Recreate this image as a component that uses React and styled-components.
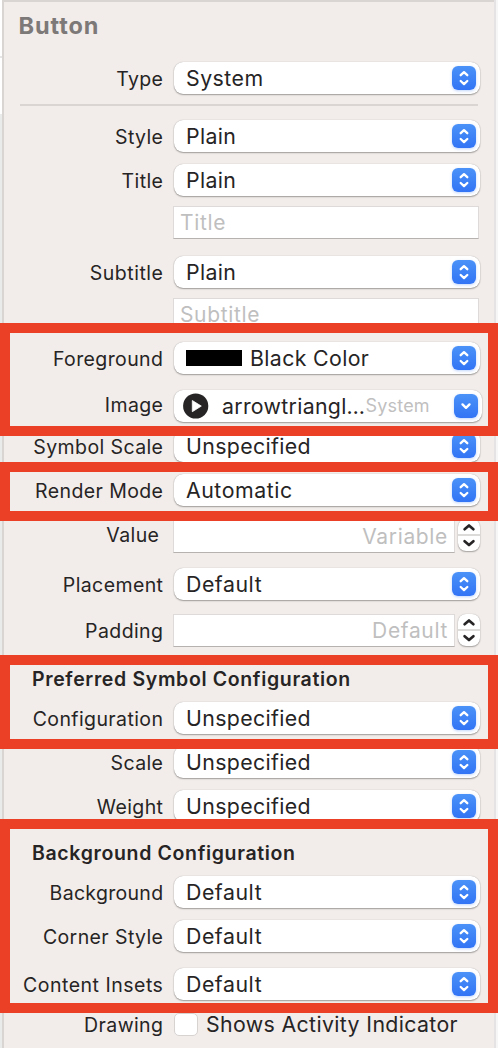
import React from "react";
import styled, { createGlobalStyle } from "styled-components";

const GlobalStyle = createGlobalStyle`
  * { box-sizing: border-box; }
  body {
    margin: 0;
    background: #f2edea;
    font-family: Inter, "Liberation Sans", sans-serif;
    color: #262424;
  }
`;

const Page = styled.div`
  display: flex;
  width: 498px;
  height: 1048px;
  overflow: hidden;
`;

const LeftGutter = styled.div`
  width: 2px;
  flex: none;
  background: linear-gradient(#fff 0 56px, #e6e6e6 56px 58px, #fff 58px 114px, #e9eaea 114px);
`;

const RightGutter = styled.div`
  width: 4px;
  flex: none;
  border-left: 2px solid #e5e3e3;
  background: #f7f6f6;
`;

const Inspector = styled.main`
  flex: 1;
  min-width: 0;
  border-top: 2px solid #d9d5d2;
  border-left: 2px solid #d9d5d2;
  background: #f2edea;
`;

const Title = styled.h1`
  margin: 0;
  padding: 8px 0 0 14.5px;
  height: 60px;
  font-size: 23.5px;
  line-height: 32px;
  font-weight: 700;
  letter-spacing: 0.9px;
  color: #7d7978;
`;

const Divider = styled.hr`
  margin: 10px 16px 14px;
  height: 2px;
  border: 0;
  background: #dad5d3;
`;

const Group = styled.section`
  position: relative;
  margin-top: ${(p) => p.$gap || 0}px;
`;

const Highlight = styled.div`
  position: absolute;
  z-index: 2;
  left: -4px;
  right: -4px;
  top: ${(p) => p.$top}px;
  bottom: ${(p) => p.$bottom}px;
  border: 10px solid #eb4026;
  pointer-events: none;
`;

const GroupTitle = styled.h2`
  margin: 0;
  padding-left: 28px;
  height: 35px;
  font-size: 19.5px;
  line-height: 24px;
  font-weight: 600;
  letter-spacing: 0.65px;
`;

const Row = styled.div`
  display: flex;
  height: 32px;
  margin-top: ${(p) => p.$gap || 0}px;
`;

const Label = styled.label`
  width: 159.4px;
  flex: none;
  margin-top: ${(p) => 1 + (p.$drop || 0)}px;
  margin-right: 10.6px;
  padding-right: ${(p) => p.$inset || 0}px;
  text-align: right;
  white-space: nowrap;
  font-size: 19.5px;
  line-height: 32px;
  letter-spacing: ${(p) => p.$track ?? 0.4}px;
`;

const PopUp = styled.div`
  display: flex;
  align-items: center;
  width: ${(p) => (p.$wide ? 308 : 306)}px;
  height: 32px;
  padding: 0 4px 0 ${(p) => (p.$wide ? 9 : 12)}px;
  border-radius: 9px;
  background: #fff;
  box-shadow: 0 0 1px rgba(0, 0, 0, 0.3), 0 1px 1.5px rgba(0, 0, 0, 0.32);
`;

const Value = styled.span`
  flex: 1;
  white-space: nowrap;
  font-size: 21.3px;
  line-height: 32px;
  letter-spacing: ${(p) => p.$track ?? 0.37}px;
`;

const ImageName = styled(Value)`
  flex: none;
  width: 143.5px;
  margin-left: 13px;
`;

const Source = styled.span`
  flex: 1;
  font-size: 18px;
  line-height: 32px;
  letter-spacing: 0.2px;
  color: #c1bfbf;
`;

const Swatch = styled.span`
  width: 56px;
  height: 16px;
  margin-right: 8px;
  background: #000;
`;

const Field = styled.div`
  width: 306px;
  height: 33px;
  padding: 0 6px;
  border: 1px solid #dedada;
  border-bottom-color: #b5b2b0;
  background: #fff;
  color: #bfbfbf;
  font-size: 21px;
  line-height: 32px;
  letter-spacing: 0.65px;
`;

const NumberField = styled(Field)`
  width: 282px;
  margin-left: -1px;
  padding-right: 6px;
  text-align: right;
`;

const FieldRow = styled(Row)`
  padding-left: 169px;
`;

const StepperBox = styled.div`
  display: flex;
  width: 22px;
  height: 32px;
  margin: ${(p) => (p.$raise ? -p.$raise : 0)}px 0 0 3px;
  border-radius: 8px;
  background: #fff;
  box-shadow: 0 0 1px rgba(0, 0, 0, 0.3), 0 1px 1.5px rgba(0, 0, 0, 0.3);
`;

const Badge = styled.span`
  display: flex;
  width: 24px;
  height: 24px;
  border-radius: 6px;
  background: linear-gradient(#4b92f8, #3274f5);
  box-shadow: 0 1px 3px rgba(50, 116, 245, 0.3);
`;

const CheckBox = styled.span`
  width: 24px;
  height: 23px;
  margin-right: 8px;
  border: 1px solid #d6d3d1;
  border-radius: 5px;
  background: #fff;
`;

const CheckText = styled(Value)`
  line-height: 23px;
`;

const Chevrons = () => (
  <Badge>
    <svg width="24" height="24" fill="none" stroke="#fff" strokeWidth="2.3" strokeLinecap="round" strokeLinejoin="round">
      <path d="M8.7 9.2 12 6.1l3.3 3.1M8.7 15l3.3 3.1 3.3-3.1" />
    </svg>
  </Badge>
);

const DownBadge = () => (
  <Badge>
    <svg width="24" height="24" fill="none" stroke="#fff" strokeWidth="2.4" strokeLinecap="round" strokeLinejoin="round">
      <path d="M8.5 10.4l3.5 3.4 3.5-3.4" />
    </svg>
  </Badge>
);

const Stepper = ({ raise }) => (
  <StepperBox $raise={raise}>
    <svg width="22" height="32" fill="none" stroke="#262424" strokeWidth="2.7" strokeLinecap="round" strokeLinejoin="round">
      <path d="M0 16h22" stroke="#dddada" strokeWidth="2" strokeLinecap="butt" />
      <path d="M6.6 10.2 11 6.4l4.4 3.8M6.6 22.2l4.4 3.8 4.4-3.8" />
    </svg>
  </StepperBox>
);

const PlayIcon = () => (
  <svg width="26" height="26" viewBox="0 0 26 26">
    <circle cx="12.7" cy="13" r="12.6" fill="#262424" />
    <path d="M9.3 7.5v11.2l9-5.6z" fill="#fff" stroke="#fff" strokeWidth=".8" strokeLinejoin="round" />
  </svg>
);

const Select = ({ label, value, gap, lt, vt, swatch }) => (
  <Row $gap={gap}>
    <Label $track={lt}>{label}</Label>
    <PopUp>
      {swatch && <Swatch />}
      <Value $track={vt}>{value}</Value>
      <Chevrons />
    </PopUp>
  </Row>
);

export default function App() {
  return (
    <Page>
      <GlobalStyle />
      <LeftGutter />
      <Inspector>
        <Title>Button</Title>
        <Select label="Type" value="System" vt={0.5} />
        <Divider />
        <Select label="Style" value="Plain" />
        <Select label="Title" value="Plain" gap={12} />
        <FieldRow $gap={10}>
          <Field>Title</Field>
        </FieldRow>
        <Select label="Subtitle" value="Plain" gap={18} lt={0.5} />
        <FieldRow $gap={10}>
          <Field>Subtitle</Field>
        </FieldRow>

        <Group $gap={12}>
          <Highlight $top={-19} $bottom={-14} />
          <Select label="Foreground" value="Black Color" swatch />
          <Row $gap={16}>
            <Label $drop={-2}>Image</Label>
            <PopUp $wide>
              <PlayIcon />
              <ImageName $track={0.3}>arrowtriangl…</ImageName>
              <Source>System</Source>
              <DownBadge />
            </PopUp>
          </Row>
        </Group>

        <Select label="Symbol Scale" value="Unspecified" gap={8} />

        <Group $gap={12}>
          <Highlight $top={-12} $bottom={-15} />
          <Select label="Render Mode" value="Automatic" vt={0.55} />
        </Group>

        <Row $gap={14}>
          <Label $inset={4} $drop={-2}>Value</Label>
          <NumberField>Variable</NumberField>
          <Stepper raise={1} />
        </Row>
        <Select label="Placement" value="Default" gap={16} vt={0.55} />
        <Row $gap={14}>
          <Label>Padding</Label>
          <NumberField>Default</NumberField>
          <Stepper />
        </Row>

        <Group $gap={21}>
          <Highlight $top={-12} $bottom={-15} />
          <GroupTitle>Preferred Symbol Configuration</GroupTitle>
          <Select label="Configuration" value="Unspecified" />
        </Group>

        <Select label="Scale" value="Unspecified" gap={12} />
        <Select label="Weight" value="Unspecified" gap={12} />

        <Group $gap={19}>
          <Highlight $top={-22} $bottom={-13} />
          <GroupTitle>Background Configuration</GroupTitle>
          <Select label="Background" value="Default" lt={0.3} vt={0.55} />
          <Select label="Corner Style" value="Default" gap={12} vt={0.55} />
          <Select label="Content Insets" value="Default" gap={16} lt={0.5} vt={0.55} />
        </Group>

        <Row $gap={13}>
          <Label $drop={-5}>Drawing</Label>
          <CheckBox />
          <CheckText>Shows Activity Indicator</CheckText>
        </Row>
      </Inspector>
      <RightGutter />
    </Page>
  );
}
